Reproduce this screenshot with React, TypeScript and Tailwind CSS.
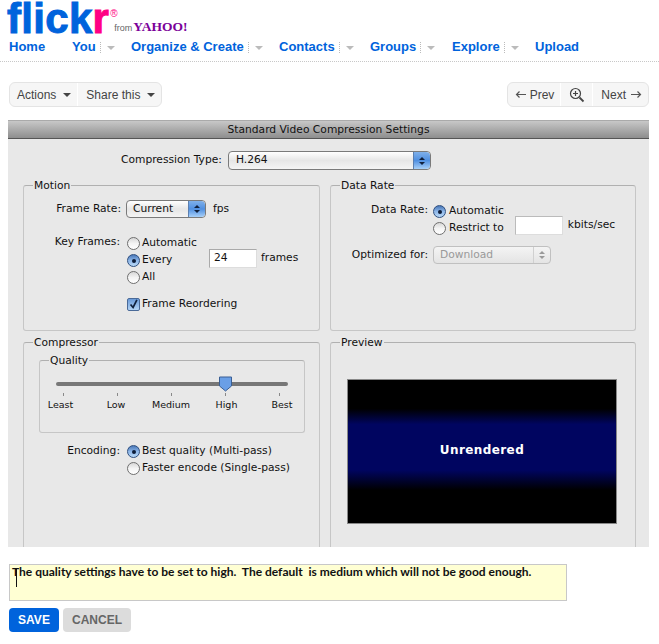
import React from 'react'

const Caret = () => (
    <span className="ml-[7px] inline-block w-0 h-0 border-x-[4px] border-x-transparent border-t-[4px] border-t-[#444]" />
)

const Radio = ({ on = false }: { on?: boolean }) => (
    <span
        className={
            on
                ? 'flex items-center justify-center w-[13px] h-[13px] shrink-0 rounded-full border border-[#2f4f7f] bg-gradient-to-b from-[#4a78b8] via-[#8db6e8] to-[#b9d9f7]'
                : 'flex items-center justify-center w-[13px] h-[13px] shrink-0 rounded-full border border-[#6f6f6f] bg-gradient-to-b from-[#d8d8d8] via-[#f4f4f4] to-white'
        }
    >
        {on && <span className="w-[4px] h-[4px] rounded-full bg-[#0c1c38]" />}
    </span>
)

const RadioRow = ({ on, label, className = '' }: { on?: boolean; label: string; className?: string }) => (
    <div className={`flex items-center gap-[2px] h-[17px] ${className}`}>
        <Radio on={on} />
        <span>{label}</span>
    </div>
)

const Stepper = ({ muted = false }: { muted?: boolean }) => (
    <span
        className={
            muted
                ? 'flex flex-col items-center justify-center gap-[2px] w-[17px] h-full border-l border-[#d0d0d0]'
                : 'flex flex-col items-center justify-center gap-[2px] w-[17px] h-full rounded-r-[4px] border-l border-[#5b7fb0] bg-gradient-to-b from-[#7fb0ea] via-[#4f8fe0] to-[#a8d0f8]'
        }
    >
        <span className={`w-0 h-0 border-x-[3px] border-x-transparent border-b-[3px] ${muted ? 'border-b-[#999]' : 'border-b-[#10203c]'}`} />
        <span className={`w-0 h-0 border-x-[3px] border-x-transparent border-t-[3px] ${muted ? 'border-t-[#999]' : 'border-t-[#10203c]'}`} />
    </span>
)

const Group = ({ title, className = '', children }: { title: string; className?: string; children?: React.ReactNode }) => (
    <fieldset className={`border border-[#c6c6c6] border-t-[#b0b0b0] rounded-[3px] ${className}`}>
        <legend className="ml-[9px] px-px leading-[13px]">{title}</legend>
        {children}
    </fieldset>
)

const navItems = [
    { label: 'Home', width: 'w-[63px]', menu: false },
    { label: 'You', width: 'w-[59px]', menu: true },
    { label: 'Organize & Create', width: 'w-[148px]', menu: true },
    { label: 'Contacts', width: 'w-[91px]', menu: true },
    { label: 'Groups', width: 'w-[82px]', menu: true },
    { label: 'Explore', width: 'w-[83px]', menu: true },
    { label: 'Upload', width: 'w-[60px]', menu: false },
]

const sliderMarks = [
    { label: 'Least', shift: 'mr-[5px]' },
    { label: 'Low', shift: 'mr-[2px]' },
    { label: 'Medium', shift: '' },
    { label: 'High', shift: 'ml-[3px]' },
    { label: 'Best', shift: 'ml-[6px]' },
]

export default function App() {
    return (
        <div className="w-[659px] h-[644px] overflow-hidden bg-white font-['Liberation_Sans',Arial,sans-serif]">
            {/* Logo */}
            <div className="flex items-start h-[40px] pl-[7px]">
                <span className="text-[42px] leading-[37px] font-bold tracking-[0.3px] text-[#0063dc] [-webkit-text-stroke:1px_#0063dc]">
                    flick<span className="text-[#ff0084] [-webkit-text-stroke:1px_#ff0084]">r</span>
                </span>
                <div className="relative w-[80px] h-[40px]">
                    <span className="absolute left-[1px] top-[9px] text-[10px] leading-[10px] text-[#ff0084]">®</span>
                    <span className="absolute left-[5px] top-[23px] text-[9px] leading-[10px] text-[#666]">from</span>
                    <span className="absolute left-[24px] top-[20px] text-[13.5px] leading-[14px] font-bold text-[#7b0099] font-['Liberation_Serif',serif]">
                        YAHOO!
                    </span>
                </div>
            </div>

            {/* Nav */}
            <nav className="flex items-center h-[14px] pl-[9px] text-[13px] font-bold text-[#0063dc]">
                {navItems.map((item) => (
                    <div key={item.label} className={`flex items-center shrink-0 ${item.width}`}>
                        <span className="leading-[14px]">{item.label}</span>
                        {item.menu && (
                            <>
                                <span className="ml-[4px] h-[11px] border-l border-dotted border-[#bbb]" />
                                <span className="ml-[6px] mt-px w-0 h-0 border-x-[4px] border-x-transparent border-t-[4px] border-t-[#bbb]" />
                            </>
                        )}
                    </div>
                ))}
            </nav>
            <div className="mt-[7px] border-t border-dotted border-[#c8c8c8]" />

            {/* Photo toolbar */}
            <div className="flex justify-between h-[25px] mt-[20px] pl-[9px] pr-[10px] text-[12px] text-[#444]">
                <div className="flex items-center rounded-[6px] border border-[#e4e4e4] bg-[#f6f6f6]">
                    <div className="flex items-center h-full pl-[7px] pr-[6px] border-r border-white">
                        Actions
                        <Caret />
                    </div>
                    <div className="flex items-center h-full pl-[8px] pr-[6px]">
                        Share this
                        <Caret />
                    </div>
                </div>
                <div className="flex items-center rounded-[6px] border border-[#e4e4e4] bg-[#f6f6f6]">
                    <div className="flex items-center gap-[3px] h-full pl-[7px] pr-[6px] border-r border-white">
                        <svg width="12" height="9" viewBox="0 0 12 9" fill="none" stroke="#555" strokeWidth="1.2">
                            <path d="M11 4.5H1.5M4.5 1.5l-3 3 3 3" />
                        </svg>
                        Prev
                    </div>
                    <div className="flex items-center justify-center w-[32px] h-full border-r border-white">
                        <svg width="16" height="16" viewBox="0 0 16 16" fill="none" stroke="#444" strokeWidth="1.2">
                            <circle cx="6.5" cy="6.5" r="5" />
                            <path d="M6.5 4v5M4 6.5h5" />
                            <path d="M10.5 10.5l4 4" strokeWidth="1.8" />
                        </svg>
                    </div>
                    <div className="flex items-center gap-[4px] h-full pl-[8px] pr-[6px]">
                        Next
                        <svg width="12" height="9" viewBox="0 0 12 9" fill="none" stroke="#555" strokeWidth="1.2">
                            <path d="M1 4.5h9.5M7.5 1.5l3 3-3 3" />
                        </svg>
                    </div>
                </div>
            </div>

            {/* Compression settings sheet */}
            <div className="w-[641px] h-[427px] ml-[8px] mt-[13px] overflow-hidden bg-[#e8e8e8] text-[10.7px] text-[#111] font-['DejaVu_Sans',sans-serif]">
                <div className="flex items-center justify-center h-[19px] pt-px border-t border-[#aaa] border-b border-b-[#555] bg-gradient-to-b from-[#c8c8c8] to-[#8e8e8e] text-[#111]">
                    Standard Video Compression Settings
                </div>

                <div className="flex items-center h-[19px] mt-[12px] pl-[113px]">
                    <span className="w-[107px]">Compression Type:</span>
                    <div className="flex items-center justify-between w-[203px] h-[19px] pl-[7px] rounded-[4px] border border-[#7a7a7a] bg-gradient-to-b from-white via-[#e6e6e6] to-[#f4f4f4]">
                        H.264
                        <Stepper />
                    </div>
                </div>

                <div className="grid grid-cols-[297px_306px] gap-x-[10px] gap-y-[5px] pl-[15px] mt-[9px]">
                    {/* Motion */}
                    <Group title="Motion" className="h-[152px]">
                        <div className="flex items-center h-[18px] mt-[8px]">
                            <span className="w-[97px] text-right">Frame Rate:</span>
                            <div className="flex items-center justify-between w-[80px] h-[18px] ml-[5px] pl-[6px] rounded-[4px] border border-[#7a7a7a] bg-gradient-to-b from-white via-[#e6e6e6] to-[#f4f4f4]">
                                Current
                                <Stepper />
                            </div>
                            <span className="ml-[7px]">fps</span>
                        </div>
                        <div className="flex mt-[17px]">
                            <span className="w-[96px] text-right leading-[13px]">Key Frames:</span>
                            <div className="ml-[7px] w-[82px]">
                                <RadioRow label="Automatic" />
                                <RadioRow on label="Every" />
                                <RadioRow label="All" />
                            </div>
                            <div className="flex items-center h-[19px] mt-[14px]">
                                <span className="flex items-center w-[48px] h-[19px] pl-[4px] bg-white border border-[#aaa] border-b-[#ddd] border-r-[#ddd]">24</span>
                                <span className="ml-[4px]">frames</span>
                            </div>
                        </div>
                        <div className="flex items-center gap-[2px] h-[17px] mt-[10px] ml-[103px]">
                            <span className="flex items-center justify-center w-[13px] h-[13px] rounded-[2px] border border-[#4a6a98] bg-gradient-to-b from-[#6a9ad8] to-[#b4d4f4]">
                                <svg width="13" height="13" viewBox="0 0 13 13" fill="none" stroke="#10203c" strokeWidth="2">
                                    <path d="M3 6.5l3 3.5 4.5-9" />
                                </svg>
                            </span>
                            <span>Frame Reordering</span>
                        </div>
                    </Group>

                    {/* Data Rate */}
                    <Group title="Data Rate" className="h-[152px]">
                        <div className="flex mt-[11px]">
                            <span className="w-[97px] text-right leading-[13px]">Data Rate:</span>
                            <div className="ml-[5px]">
                                <RadioRow on label="Automatic" className="gap-[3px]" />
                                <RadioRow label="Restrict to" className="gap-[3px]" />
                            </div>
                            <div className="flex items-center h-[19px] mt-[13px] ml-[11px]">
                                <span className="w-[48px] h-[19px] bg-white border border-[#bbb] border-b-[#ddd] border-r-[#ddd]" />
                                <span className="ml-[5px]">kbits/sec</span>
                            </div>
                        </div>
                        <div className="flex items-center mt-[9px]">
                            <span className="w-[97px] text-right">Optimized for:</span>
                            <div className="flex items-center justify-between w-[118px] h-[18px] ml-[5px] pl-[6px] rounded-[4px] border border-[#c0c0c0] bg-gradient-to-b from-[#f4f4f4] to-[#e4e4e4] text-[#999]">
                                Download
                                <Stepper muted />
                            </div>
                        </div>
                    </Group>

                    {/* Compressor */}
                    <Group title="Compressor" className="h-[240px]">
                        <Group title="Quality" className="w-[266px] h-[79px] ml-[15px] mt-[5px]">
                            <div className="relative h-[4px] mt-[15px] mx-[16px] rounded-full bg-[#777]">
                                <svg className="absolute left-[162px] -top-[6px]" width="15" height="16" viewBox="0 0 15 16">
                                    <path d="M1.5 1h12v9L7.5 15l-6-5z" fill="#6a9fe6" stroke="#3a5f94" />
                                </svg>
                            </div>
                            <div className="flex gap-[8px] mt-[7px] text-[9.5px] leading-[12px]">
                                {sliderMarks.map((mark) => (
                                    <div key={mark.label} className="flex flex-col items-center shrink-0 w-[46px]">
                                        <span className="w-px h-[3px] mb-[3px] bg-[#888]" />
                                        <span className={mark.shift}>{mark.label}</span>
                                    </div>
                                ))}
                            </div>
                        </Group>
                        <div className="flex mt-[10px]">
                            <span className="w-[96px] text-right leading-[15px]">Encoding:</span>
                            <div className="ml-[7px]">
                                <RadioRow on label="Best quality (Multi-pass)" />
                                <RadioRow label="Faster encode (Single-pass)" />
                            </div>
                        </div>
                    </Group>

                    {/* Preview */}
                    <Group title="Preview" className="h-[240px]">
                        <div className="flex items-center justify-center w-[270px] h-[145px] mt-[30px] ml-[16px] pb-[4px] border border-[#888] bg-[linear-gradient(to_bottom,#000_0%,#000_20%,#000560_31%,#000560_63%,#000_77%,#000_100%)] text-white text-[12px] font-bold tracking-[0.4px]">
                            Unrendered
                        </div>
                    </Group>
                </div>
            </div>

            {/* Comment */}
            <div className="relative w-[558px] h-[37px] mt-[17px] ml-[9px] border border-[#c8c8c8] bg-[#ffffd3] pl-[2px] text-[12px] leading-[14px] font-bold text-[#111] font-['Lato',sans-serif] whitespace-pre">
                The quality settings have to be set to high.  The default  is medium which will not be good enough.
                <span className="absolute left-[6px] top-[4px] w-px h-[18px] bg-[#111]" />
            </div>

            <div className="flex gap-[4px] mt-[7px] ml-[9px] text-[12px] font-bold">
                <button className="w-[50px] h-[24px] rounded-[4px] bg-[#0063dc] text-white">SAVE</button>
                <button className="w-[68px] h-[24px] rounded-[4px] bg-[#dcdcdc] text-[#666]">CANCEL</button>
            </div>
        </div>
    )
}
